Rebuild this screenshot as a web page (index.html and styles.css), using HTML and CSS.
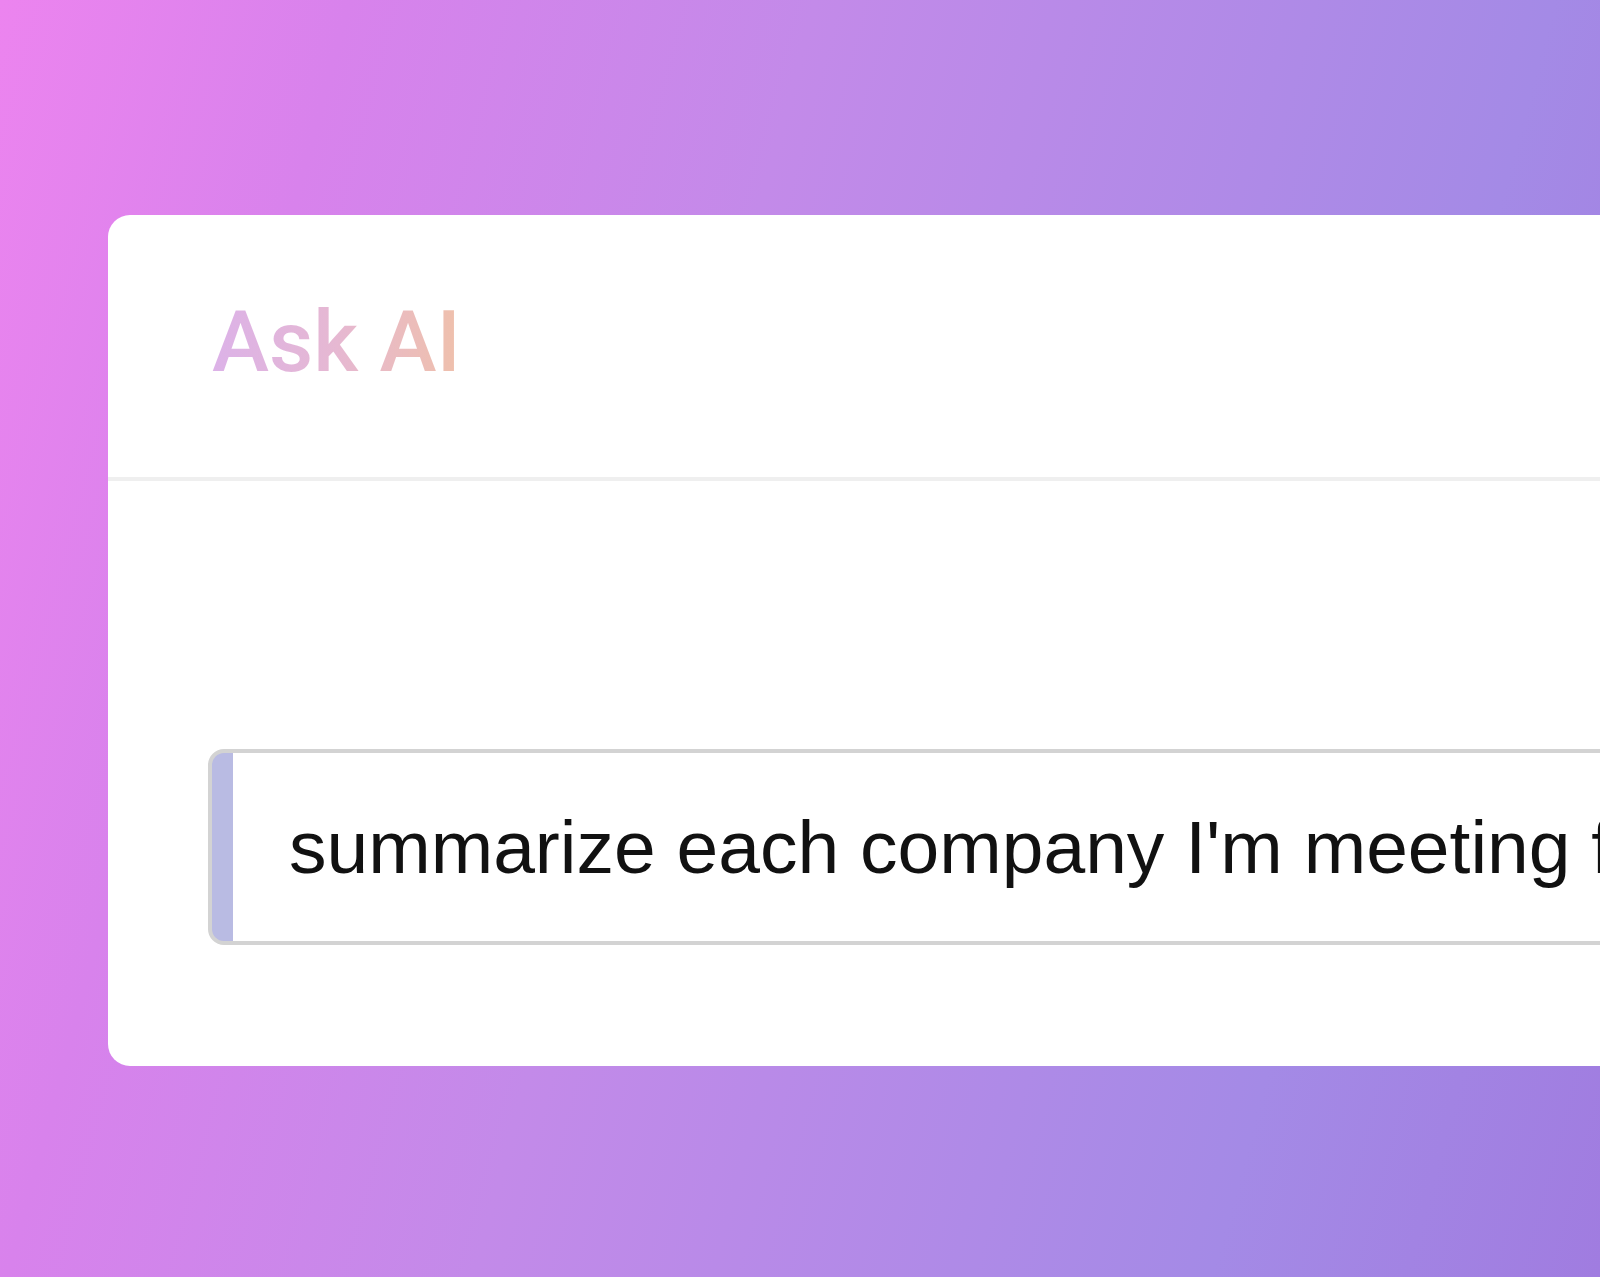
FILE: index.html
```html
<!DOCTYPE html>
<html lang="en">
<head>
<meta charset="utf-8">
<title>Ask AI</title>
<link rel="stylesheet" href="styles.css">
</head>
<body>
  <main class="stage">
    <section class="card">
      <header class="card-header">
        <h1 class="title">Ask AI</h1>
      </header>
      <div class="card-body">
        <div class="prompt">
          <span class="prompt-text">summarize each company I'm meeting for</span>
        </div>
      </div>
    </section>
  </main>
</body>
</html>
```

FILE: styles.css
```css
html, body {
  margin: 0;
  padding: 0;
  height: 100%;
  overflow: hidden;
}

body {
  font-family: "Liberation Sans", Arial, sans-serif;
}

.stage {
  width: 1600px;
  height: 1277px;
  background: linear-gradient(105deg,
    #ec84ef 0%,
    #d882ec 18%,
    #c38ae9 42%,
    #a48ae6 80%,
    #a07ce0 100%);
  padding-top: 215px;
  padding-left: 108px;
  box-sizing: border-box;
  overflow: hidden;
}

.card {
  width: 1700px;
  height: 851px;
  background: #ffffff;
  border-radius: 22px;
  display: flex;
  flex-direction: column;
}

.card-header {
  height: 266px;
  box-sizing: border-box;
  padding: 84px 0 0 104px;
  border-bottom: 4px solid #efefef;
}

.title {
  margin: 0;
  font-family: Roboto, "Liberation Sans", Arial, sans-serif;
  font-size: 86px;
  line-height: 86px;
  font-weight: 500;
  display: inline-block;
  background: linear-gradient(90deg, #dcb2e8 0%, #e6b8d2 50%, #efc0ab 100%);
  -webkit-background-clip: text;
  background-clip: text;
  color: transparent;
}

.card-body {
  padding: 268px 0 0 100px;
}

.prompt {
  width: 1600px;
  box-sizing: border-box;
  border: 4px solid #d3d3d3;
  border-radius: 16px;
  background: linear-gradient(90deg, #b9bbe3 21px, #ffffff 21px);
  padding: 56px 0 56px 77px;
  white-space: nowrap;
  overflow: hidden;
}

.prompt-text {
  display: block;
  font-size: 75px;
  line-height: 76px;
  color: #111111;
}
```
